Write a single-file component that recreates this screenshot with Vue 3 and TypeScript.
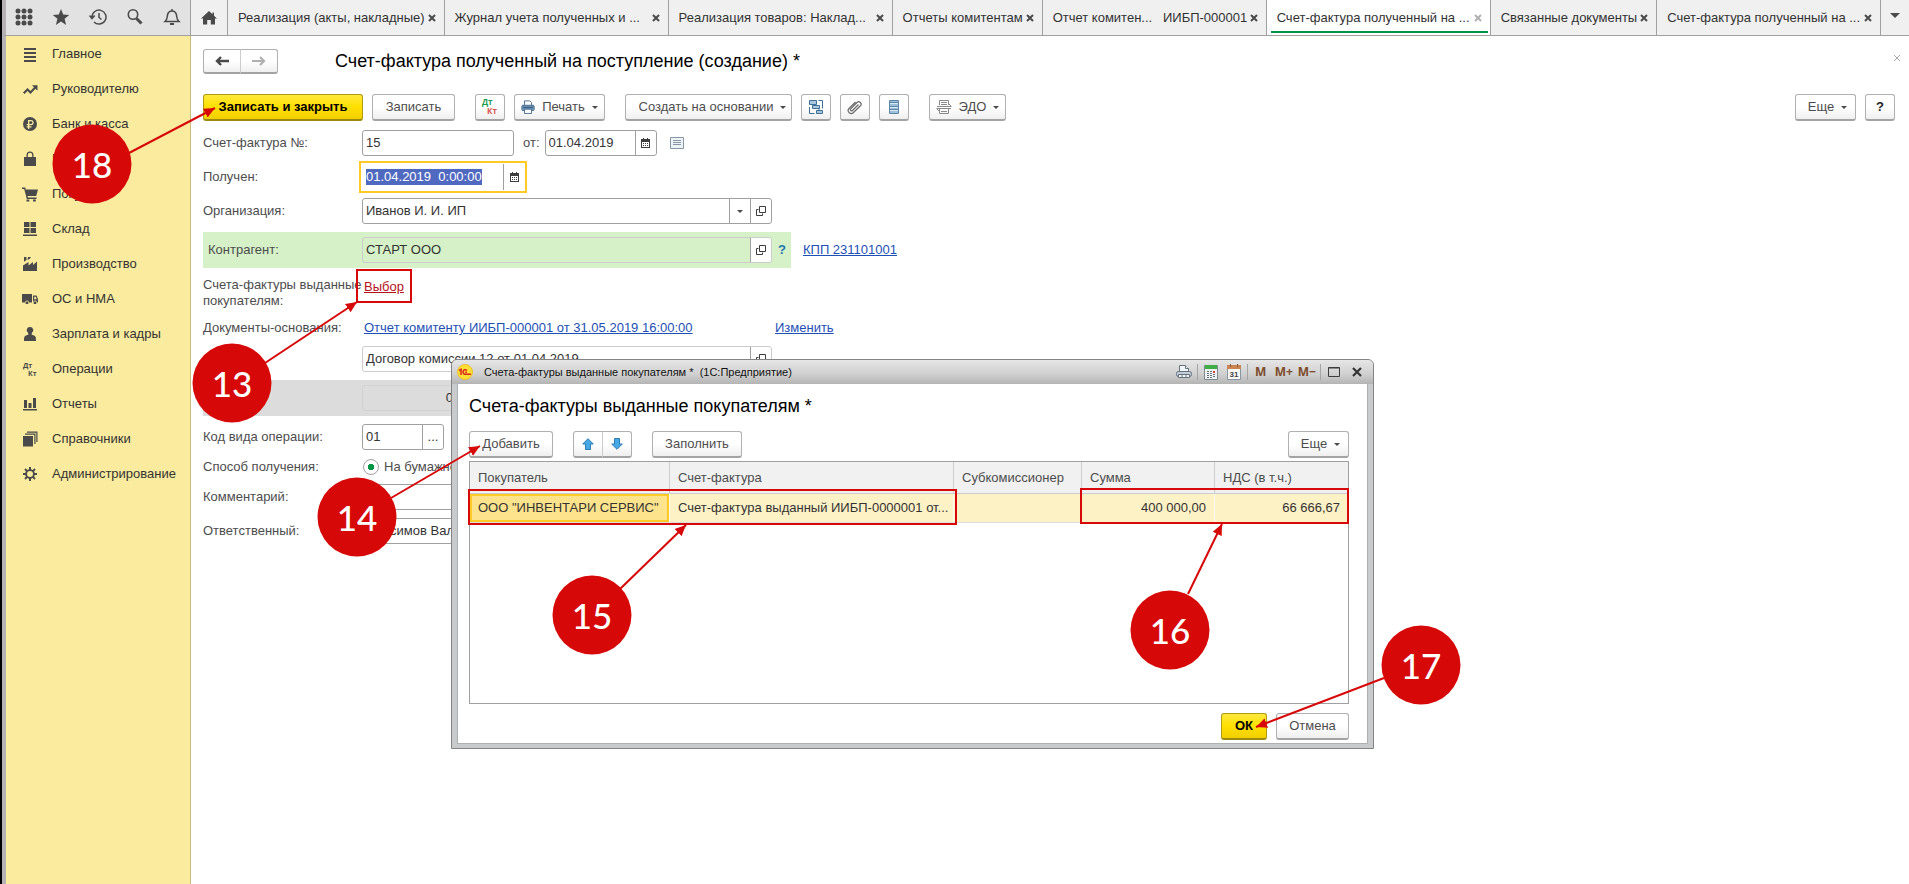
<script setup lang="ts">
import { onMounted, ref } from 'vue'

interface Tab {
  title: string
  size: 'full' | 'fit'
  active?: boolean
}

interface Section {
  title: string
  icon: string
}

interface Callout {
  label: string
  cx: number
  cy: number
  x1: number
  y1: number
  x2: number
  y2: number
}

const tabs: Tab[] = [
  { title: 'Реализация (акты, накладные)', size: 'fit' },
  { title: 'Журнал учета полученных и ...', size: 'full' },
  { title: 'Реализация товаров: Наклад...', size: 'full' },
  { title: 'Отчеты комитентам', size: 'fit' },
  { title: 'Отчет комитен...\u00a0\u00a0 ИИБП-000001', size: 'full' },
  { title: 'Счет-фактура полученный на ...', size: 'full', active: true },
  { title: 'Связанные документы', size: 'fit' },
  { title: 'Счет-фактура полученный на ...', size: 'full' },
]

const sections: Section[] = [
  { title: 'Главное', icon: 'M2 2h12v2H2zM2 6h12v2H2zM2 10h12v2H2zM2 14h12v2H2z' },
  { title: 'Руководителю', icon: 'M1 11.5 5.5 7l3 3L12 6.300 10 4.300h5.500v5.500l-2-2L8.500 13l-3-3-3 3z' },
  {
    title: 'Банк и касса',
    icon: 'M8 1a7 7 0 1 0 0 14A7 7 0 0 0 8 1zM6 4h3a2.500 2.500 0 0 1 0 5.200H7.300v1H9.500v1.200H7.300V13H6v-1.600H4.700v-1.200H6v-1H4.700V8H6zM7.300 5.200V8H9a1.400 1.400 0 0 0 0-2.800z',
  },
  { title: 'Продажи', icon: 'M2 6h2.500V4a3.500 3.500 0 0 1 7 0v2H14v9H2zM5.800 6h4.400V4a2.200 2.200 0 0 0-4.400 0z' },
  {
    title: 'Покупки',
    icon: 'M0 1.500h3.200l.6 2H16l-1.800 6.500H5.500l.5 1.500h8.500V13H4.800L2.200 3H0zM4.500 13.500h2.800v2H4.500zM11 13.500h2.800v2H11z',
  },
  { title: 'Склад', icon: 'M2 1h5.500v5H2zM8.500 1H14v5H8.500zM2 7h5.500v5H2zM8.500 7H14v5H8.500zM1 13.500h14V15H1z' },
  { title: 'Производство', icon: 'M1 15V9.500L6.500 6v3.500L11 6v3l4-3.500V15zM2 1h2.500v3L2 5.800zM6 1h3L7.500 3 5.500 4z' },
  {
    title: 'ОС и НМА',
    icon: 'M0 3h10v8.500H7a2 2 0 0 0-4 0H0zM11 4.500h3.500L16 8v3.500h-1a2 2 0 0 0-4 0zM12.200 5.700v2.500h2.500l-1-2.500zM3.700 10.500h2.600v2.500H3.700zM11.700 10.500h2.600v2.500h-2.600z',
  },
  { title: 'Зарплата и кадры', icon: 'M8 1a3.200 3.200 0 0 1 2 5.800L9.500 8.500 12 9.500c1.500.5 2 1.500 2 5.500H2c0-4 .5-5 2-5.500l2.500-1L6 6.800A3.200 3.200 0 0 1 8 1z' },
  { title: 'Операции', icon: '' },
  { title: 'Отчеты', icon: 'M2 4h3v8H2zM6.500 7h3v5h-3zM11 2h3v10h-3zM1 13h14v1.500H1z' },
  { title: 'Справочники', icon: 'M1 5h10v10.500H1zM3 2.500h10.500V13h-1.200V3.700H3zM5 .5h10.500V11h-1.200V1.700H5z' },
  {
    title: 'Администрирование',
    icon: 'M7 1h2v2.200l1.700.7 1.600-1.600 1.400 1.400-1.600 1.600.7 1.700H15v2h-2.200l-.7 1.700 1.600 1.600-1.400 1.400-1.600-1.600-1.700.7V15H7v-2.200l-1.700-.7-1.600 1.600-1.400-1.400 1.600-1.600L3.200 9H1V7h2.200l.7-1.700-1.600-1.600 1.400-1.400 1.600 1.600L7 3.200zM8 5a3 3 0 1 0 0 6 3 3 0 0 0 0-6z',
  },
]

const callouts: Callout[] = [
  { label: '18', cx: 92, cy: 164, x1: 129, y1: 153, x2: 215, y2: 108 },
  { label: '13', cx: 232, cy: 383, x1: 265, y1: 363, x2: 357, y2: 302 },
  { label: '14', cx: 357, cy: 517, x1: 391, y1: 498, x2: 480, y2: 446 },
  { label: '15', cx: 592, cy: 615, x1: 620, y1: 589, x2: 686, y2: 525 },
  { label: '16', cx: 1170, cy: 630, x1: 1188, y1: 594, x2: 1222, y2: 524 },
  { label: '17', cx: 1421, cy: 665, x1: 1384, y1: 678, x2: 1256, y2: 727 },
]

const received = ref<HTMLInputElement | null>(null)

onMounted(() => {
  received.value?.focus({ preventScroll: true })
  received.value?.select()
})
</script>

<template>
  <div class="app">
    <header class="topbar">
      <div class="tools">
        <button class="tool" aria-label="Меню">
          <svg width="18" height="18" viewBox="0 0 18 18" fill="#4a4a4a">
            <g v-for="r in 3" :key="r">
              <circle v-for="c in 3" :key="c" :cx="c * 6 - 3" :cy="r * 6 - 3" r="2.500" />
            </g>
          </svg>
        </button>
        <button class="tool" aria-label="Избранное">
          <svg width="18" height="18" viewBox="0 0 18 18" fill="#4a4a4a">
            <path d="M9 1l2.200 5.600 6 .4-4.600 3.800L14.100 17 9 13.600 3.900 17l1.500-6.200L.8 7l6-.4z" />
          </svg>
        </button>
        <button class="tool" aria-label="История">
          <svg width="18" height="18" viewBox="0 0 18 18" fill="none" stroke="#4a4a4a" stroke-width="1.500">
            <path d="M3 9a7 7 0 1 1 2 5M0.500 7.500 3 10.500l2.700-3M10 5v4.500l2.500 2" />
          </svg>
        </button>
        <button class="tool" aria-label="Поиск">
          <svg width="18" height="18" viewBox="0 0 18 18" fill="none" stroke="#4a4a4a">
            <circle cx="7" cy="6.500" r="4.700" stroke-width="1.600" />
            <path d="M10.500 10.500l5 5" stroke-width="3" />
          </svg>
        </button>
        <button class="tool" aria-label="Уведомления">
          <svg width="18" height="18" viewBox="0 0 18 18" fill="none" stroke="#4a4a4a" stroke-width="1.500">
            <path d="M9 1v2M2 13.500c2.500-2 2-4 2.500-6.500C5 4.500 6.500 3 9 3s4 1.500 4.500 4c.5 2.500 0 4.500 2.500 6.500z" />
            <path d="M7 16h4" stroke-width="2" />
          </svg>
        </button>
      </div>
      <nav class="tabs">
        <button class="home" aria-label="Начальная страница">
          <svg width="16" height="14" viewBox="0 0 16 14" fill="#4a4a4a">
            <path d="M8 0l3.500 3.300V1.500H13v3.200L16 7.500h-2V13.500H9.800V9H6.200v4.500H2V7.500H0z" />
          </svg>
        </button>
        <div v-for="(tab, i) in tabs" :key="i" class="tab" :class="[tab.size, { active: tab.active }]">
          <a href="#" class="tab-link">{{ tab.title }}</a>
          <button class="tab-close" aria-label="Закрыть">
            <svg width="8" height="8" viewBox="0 0 8 8"><path d="M1 1l6 6M7 1 1 7" /></svg>
          </button>
        </div>
        <button class="tab-more" aria-label="Все вкладки"><i class="caret big"></i></button>
      </nav>
    </header>

    <div class="body">
      <aside class="sidebar">
        <a v-for="s in sections" :key="s.title" href="#" class="section">
          <svg class="section-icon" width="16" height="16" viewBox="0 0 16 16" fill="#4a4a4a" fill-rule="evenodd">
            <path v-if="s.icon" :d="s.icon" />
            <g v-else class="dtkt">
              <text x="1" y="7">Дт</text>
              <text x="6" y="15">Кт</text>
            </g>
          </svg>
          <span>{{ s.title }}</span>
        </a>
      </aside>

      <main class="page">
        <div class="titlebar">
          <div class="history">
            <button class="btn" aria-label="Назад">
              <svg width="14" height="12" viewBox="0 0 14 12" fill="none" stroke="#4a4a4a" stroke-width="2.400"><path d="M14 6H2M6 2 2 6l4 4" /></svg>
            </button>
            <button class="btn" aria-label="Вперед">
              <svg width="14" height="12" viewBox="0 0 14 12" fill="none" stroke="#b0b0b0" stroke-width="2.200"><path d="M0 6h12M8 2l4 4-4 4" /></svg>
            </button>
          </div>
          <h1>Счет-фактура полученный на поступление (создание) *</h1>
          <button class="page-close" aria-label="Закрыть">
            <svg width="8" height="8" viewBox="0 0 8 8" stroke="#a8a8a8"><path d="M1 1l6 6M7 1 1 7" /></svg>
          </button>
        </div>

        <div class="toolbar">
          <button class="btn primary save-close">Записать и закрыть</button>
          <button class="btn save">Записать</button>
          <button class="btn square group" aria-label="Дт Кт">
            <svg width="20" height="20" viewBox="0 0 20 20" class="dtkt large">
              <text x="2" y="8" fill="#1d9c4f">Дт</text>
              <text x="7" y="17" fill="#d9534a">Кт</text>
            </svg>
          </button>
          <button class="btn print">
            <svg width="14" height="14" viewBox="0 0 16 16">
              <path d="M4 6V1h6l2 2v3" fill="#fff" stroke="#3f6485" />
              <rect x="1" y="6" width="14" height="6" rx="1" fill="#7ca6c9" stroke="#3f6485" />
              <path d="M2 8.500h12" stroke="#3f6485" stroke-width="2" />
              <path d="M4 10.500h8v5H4z" fill="#fff" stroke="#3f6485" />
            </svg>
            <span>Печать</span><i class="caret"></i>
          </button>
          <button class="btn group create">Создать на основании<i class="caret"></i></button>
          <button class="btn square" aria-label="Структура подчиненности">
            <svg width="16" height="16" viewBox="0 0 16 16" fill="#a9c6dd" stroke="#3c7099">
              <path d="M1.500 1.500h7v4h-7zM4.500 6.500h7v3h-7zM8.500 11.500h6v3h-6z" />
              <path d="M10.500 1.500h4v8M1.500 8v6.500h5M5 5.500v1M11 9.500v2" fill="none" />
            </svg>
          </button>
          <button class="btn square" aria-label="Файлы">
            <svg width="16" height="16" viewBox="0 0 16 16" fill="none" stroke="#6b6b6b" stroke-width="1.200">
              <path d="M11.500 5.500l-6 6a1 1 0 0 1-1.700-1.700L10 3.500a2.300 2.300 0 0 1 3.400 3.300L6.500 13.500A3 3 0 0 1 2 9.500L8.500 3" />
            </svg>
          </button>
          <button class="btn square" aria-label="Дополнительные сведения">
            <svg width="12" height="16" viewBox="0 0 12 16" stroke="#5c86a8">
              <path d="M1.500 1.500h9v13h-9z" fill="#9dc0da" />
              <path d="M2 4.500h8M2 8.500h8M2 11.500h8" stroke="#d9e8f3" />
              <path d="M2 3.500h8M2 7.500h8M2 10.500h8" />
            </svg>
          </button>
          <button class="btn group edo">
            <svg width="16" height="16" viewBox="0 0 16 16" fill="none" stroke="#8a8a8a">
              <path d="M3.500 6V1.500h9V6M3.500 10v4.500h9V10M5 3.500h6M5 5.500h6M1 7.500h14M1 9.500h14M5 12.500h6M13 5l2.500 2.500M3 12 .5 9.500" />
            </svg>
            <span>ЭДО</span><i class="caret"></i>
          </button>
          <span class="spacer"></span>
          <button class="btn more">Еще<i class="caret"></i></button>
          <button class="btn square help">?</button>
        </div>

        <form class="form" @submit.prevent>
          <div class="row">
            <label for="number">Счет-фактура №:</label>
            <div class="field number"><input id="number" value="15" /></div>
            <label class="inline" for="date">от:</label>
            <div class="field date">
              <input id="date" value="01.04.2019" />
              <button type="button" aria-label="Календарь"><svg class="cal" width="9" height="10" viewBox="0 0 9 10"><path d="M0 1h2V0h1v1h3V0h1v1h2v9H0zM1 4v5h7V4z" fill-rule="evenodd" /><path d="M2 5h1v1H2zM4 5h1v1H4zM6 5h1v1H6zM2 7h1v1H2zM4 7h1v1H4zM6 7h1v1H6z" /></svg></button>
            </div>
            <svg class="note" width="14" height="12" viewBox="0 0 14 12" fill="#eef3f7" stroke="#8797a6">
              <path d="M.5.5h13v11H.5zM3 3.500h8M3 5.500h8M3 7.500h8" />
            </svg>
          </div>

          <div class="row">
            <label for="received">Получен:</label>
            <div class="field received">
              <input id="received" ref="received" value="01.04.2019  0:00:00" />
              <button type="button" aria-label="Календарь"><svg class="cal" width="9" height="10" viewBox="0 0 9 10"><path d="M0 1h2V0h1v1h3V0h1v1h2v9H0zM1 4v5h7V4z" fill-rule="evenodd" /><path d="M2 5h1v1H2zM4 5h1v1H4zM6 5h1v1H6zM2 7h1v1H2zM4 7h1v1H4zM6 7h1v1H6z" /></svg></button>
            </div>
          </div>

          <div class="row">
            <label for="org">Организация:</label>
            <div class="field wide">
              <input id="org" value="Иванов И. И. ИП" />
              <button type="button" aria-label="Выбрать"><i class="caret"></i></button>
              <button type="button" aria-label="Открыть"><svg class="open" width="10" height="10" viewBox="0 0 10 10"><path d="M3.500.5h6v6h-6zM2.500 3.500h-2v6h6v-2" /></svg></button>
            </div>
          </div>

          <div class="row">
            <div class="band green">
              <label for="partner">Контрагент:</label>
              <div class="field wide locked">
                <input id="partner" value="СТАРТ ООО" readonly />
                <button type="button" aria-label="Открыть"><svg class="open" width="10" height="10" viewBox="0 0 10 10"><path d="M3.500.5h6v6h-6zM2.500 3.500h-2v6h6v-2" /></svg></button>
              </div>
              <button type="button" class="hint">?</button>
            </div>
            <a href="#" class="kpp">КПП 231101001</a>
          </div>

          <div class="row invoices">
            <span class="caption">Счета-фактуры выданные покупателям:</span>
            <a href="#" class="pick">Выбор</a>
          </div>

          <div class="row basis">
            <span class="caption">Документы-основания:</span>
            <a href="#" class="doc">Отчет комитенту ИИБП-000001 от 31.05.2019 16:00:00</a>
            <a href="#">Изменить</a>
          </div>

          <div class="row">
            <span class="caption"></span>
            <div class="field wide locked">
              <input value="Договор комиссии 12 от 01.04.2019" aria-label="Договор" readonly />
              <button type="button" aria-label="Открыть"><svg class="open" width="10" height="10" viewBox="0 0 10 10"><path d="M3.500.5h6v6h-6zM2.500 3.500h-2v6h6v-2" /></svg></button>
            </div>
          </div>

          <div class="row">
            <div class="band gray">
              <label for="sum">Сумма:</label>
              <div class="field sum locked"><input id="sum" value="0,00" readonly /></div>
            </div>
          </div>

          <div class="row">
            <label for="code">Код вида операции:</label>
            <div class="field code">
              <input id="code" value="01" />
              <button type="button" aria-label="Выбрать">...</button>
            </div>
          </div>

          <div class="row way">
            <span class="caption">Способ получения:</span>
            <label class="radio"><input type="radio" name="way" checked /><span>На бумажном носителе</span></label>
          </div>

          <div class="row">
            <label for="comment">Комментарий:</label>
            <div class="field wide"><input id="comment" /></div>
          </div>

          <div class="row">
            <label for="person">Ответственный:</label>
            <div class="field wide"><input id="person" value="Максимов Валерий" /></div>
          </div>
        </form>
      </main>
    </div>

    <section class="dialog" role="dialog" aria-label="Счета-фактуры выданные покупателям">
      <div class="dialog-bar">
        <svg width="16" height="16" viewBox="0 0 16 16">
          <circle cx="8" cy="8" r="7.500" fill="#ffe135" stroke="#e8bd2c" />
          <path d="M2 6.500 4 5.300V11M9.800 6.500A2.200 2.200 0 1 0 8.200 10.200H14M10 8.300H8.300" fill="none" stroke="#d9261c" stroke-width="1.500" />
        </svg>
        <span class="dialog-caption">Счета-фактуры выданные покупателям *&nbsp; (1С:Предприятие)</span>
        <div class="sys">
          <button aria-label="Печать">
            <svg width="16" height="16" viewBox="0 0 16 16" fill="#f4f7fa" stroke="#65717d">
              <path d="M3.500 8V1.500h6l3 3V8z" /><path d="M9.500 1.500v3h3" />
              <rect x=".5" y="7.500" width="15" height="5" rx="2" fill="#c3ccd6" />
              <path d="M2.500 10.500h11v3h-11z" /><path d="M5 12h2M9 12h2" />
            </svg>
          </button>
          <i class="sep"></i>
          <button aria-label="Калькулятор">
            <svg width="14" height="16" viewBox="0 0 14 16">
              <path d="M.5 1.500h13v14H.5z" fill="#eef1f2" stroke="#7d8a90" />
              <path d="M1 1h12v4H1z" fill="#3fae49" />
              <path d="M3 7h2v1H3zM6 7h2v1H6zM3 9h2v1H3zM6 9h2v1H6zM3 11h2v1H3zM6 11h2v1H6zM3 13h2v1H3zM6 13h2v1H6zM9 10h2v1H9zM9 12h2v1H9z" fill="#66757c" />
              <path d="M9 7h2v2H9z" fill="#d8453a" />
            </svg>
          </button>
          <button aria-label="Календарь">
            <svg width="14" height="16" viewBox="0 0 14 16">
              <path d="M.5 2.500h13v13H.5z" fill="#fafafa" stroke="#8796a3" />
              <path d="M0 1h14v4H0z" fill="#c98452" /><path d="M3 0h1v3H3zM10 0h1v3h-1z" fill="#8a5a35" />
              <text x="7" y="13" text-anchor="middle" class="day">31</text>
            </svg>
          </button>
          <i class="sep"></i>
          <button class="mem">M</button>
          <button class="mem">M+</button>
          <button class="mem">M−</button>
          <i class="sep"></i>
          <button aria-label="Развернуть">
            <svg width="12" height="12" viewBox="0 0 12 12" fill="none" stroke="#3d3d3d"><path d="M.5 1.500h11v9H.5zM.5 2h11" /></svg>
          </button>
          <button aria-label="Закрыть">
            <svg width="10" height="10" viewBox="0 0 10 10" stroke="#333" stroke-width="2.200"><path d="M1 1l8 8M9 1 1 9" /></svg>
          </button>
        </div>
      </div>

      <div class="dialog-body">
        <h2>Счета-фактуры выданные покупателям *</h2>
        <div class="dialog-tools">
          <button class="btn add">Добавить</button>
          <div class="history move">
            <button class="btn" aria-label="Вверх">
              <svg width="12" height="12" viewBox="0 0 12 12" fill="#46a9e6" stroke="#2f7cb0"><path d="M6 .7 11.300 6H8.500v5.500h-5V6H.7z" /></svg>
            </button>
            <button class="btn" aria-label="Вниз">
              <svg width="12" height="12" viewBox="0 0 12 12" fill="#46a9e6" stroke="#2f7cb0"><path d="M6 11.300.7 6h2.800V.5h5V6h2.800z" /></svg>
            </button>
          </div>
          <button class="btn fill">Заполнить</button>
          <span class="spacer"></span>
          <button class="btn more">Еще<i class="caret"></i></button>
        </div>

        <div class="grid-box">
          <table>
            <colgroup>
              <col class="c1" /><col class="c2" /><col class="c3" /><col class="c4" /><col />
            </colgroup>
            <thead>
              <tr><th>Покупатель</th><th>Счет-фактура</th><th>Субкомиссионер</th><th>Сумма</th><th>НДС (в т.ч.)</th></tr>
            </thead>
            <tbody>
              <tr>
                <td class="current">ООО "ИНВЕНТАРИ СЕРВИС"</td>
                <td>Счет-фактура выданный ИИБП-0000001 от...</td>
                <td></td>
                <td class="num">400 000,00</td>
                <td class="num">66 666,67</td>
              </tr>
            </tbody>
          </table>
        </div>

        <div class="dialog-actions">
          <button class="btn primary ok">ОК</button>
          <button class="btn cancel">Отмена</button>
        </div>
      </div>
    </section>

    <svg class="callouts">
      <defs>
        <marker id="tip" markerUnits="userSpaceOnUse" markerWidth="12" markerHeight="12" refX="11" refY="6" orient="auto">
          <path d="M0 1l11 5-11 5z" fill="#d70808" />
        </marker>
      </defs>
      <g fill="none" stroke="#d70808" stroke-width="2">
        <rect x="357" y="270" width="54" height="32" />
        <rect x="469" y="490" width="487" height="34" />
        <rect x="1081" y="489" width="267" height="34" />
      </g>
      <g v-for="c in callouts" :key="c.label">
        <line :x1="c.x1" :y1="c.y1" :x2="c.x2" :y2="c.y2" stroke="#d70808" stroke-width="2" marker-end="url(#tip)" />
        <circle :cx="c.cx" :cy="c.cy" r="39.500" fill="#d70808" />
        <text :x="c.cx" :y="c.cy + 14" text-anchor="middle">{{ c.label }}</text>
      </g>
    </svg>
  </div>
</template>

<style>
body {
  background: #fff;
}
</style>

<style scoped>
.app,
.app * {
  box-sizing: border-box;
}

.app {
  position: relative;
  display: flex;
  flex-direction: column;
  min-height: 100vh;
  overflow: hidden;
  border-left: 2px solid #000;
  font: 13px/16px "Liberation Sans", Arial, sans-serif;
  color: #333;
}

button,
input {
  font: inherit;
  color: inherit;
  margin: 0;
  padding: 0;
  border: 0;
  background: none;
}

svg {
  display: block;
  flex: none;
}

a {
  color: #1d4fb5;
}

.topbar {
  display: flex;
  height: 36px;
  border-left: 4px solid #b5b1b4;
  border-bottom: 1px solid #a0a0a0;
}

.tools {
  display: flex;
  align-items: center;
  width: 185px;
  flex: none;
  background: #e2e2e2;
  border-right: 1px solid #a0a0a0;
}

.tool {
  display: flex;
  justify-content: center;
  width: 37px;
  padding-bottom: 2px;
}

.tabs {
  display: flex;
  flex: 1;
  min-width: 0;
  background: #f0f0f0;
}

.home {
  display: flex;
  align-items: center;
  justify-content: center;
  width: 37px;
  flex: none;
  border-right: 1px solid #a0a0a0;
}

.tab {
  display: flex;
  align-items: center;
  justify-content: space-between;
  padding: 0 4px 0 10px;
  border-right: 1px solid #a0a0a0;
  white-space: nowrap;
}

.tab.full {
  flex: 0 1 224px;
  min-width: 0;
}

.tab-link {
  color: #333;
  text-decoration: none;
}

.tab-close {
  padding: 4px 4px 4px 3px;
  stroke: #4a4a4a;
  stroke-width: 2;
}

.tab.active {
  background: linear-gradient(#009646, #009646) 4px 31px / calc(100% - 6px) 2px no-repeat #fff;
}

.active .tab-close {
  stroke: #b0b0b0;
}

.tab-more {
  display: flex;
  align-items: center;
  justify-content: center;
  flex: 1;
  padding-bottom: 4px;
}

.caret {
  width: 0;
  height: 0;
  flex: none;
  border: 3px solid transparent;
  border-top-color: #4a4a4a;
  border-bottom: 0;
}

.caret.big {
  border-width: 5px;
  border-bottom: 0;
}

.body {
  display: flex;
  flex: 1;
}

.sidebar {
  width: 189px;
  flex: none;
  background: #faeb9e;
  border-left: 4px solid #b5b1b4;
  border-right: 1px solid #c9ba78;
}

.section {
  display: flex;
  align-items: center;
  gap: 14px;
  height: 35px;
  padding-left: 16px;
  color: #333;
  text-decoration: none;
}

.dtkt {
  font: bold 7px "Open Sans", sans-serif;
}

.dtkt.large {
  font-size: 8px;
}

.page {
  flex: 1;
  min-width: 0;
  padding: 12px 14px 0 12px;
}

.titlebar {
  display: flex;
  align-items: center;
  height: 26px;
}

h1,
h2 {
  margin: 0;
  font-size: 18px;
  line-height: 24px;
  font-weight: 400;
  color: #000;
}

h1 {
  flex: 1;
  margin-left: 57px;
}

.page-close {
  align-self: flex-start;
  margin: 6px -6px 0 0;
}

.btn {
  display: flex;
  align-items: center;
  justify-content: center;
  gap: 9px;
  height: 27px;
  border: 1px solid #b0b0b0;
  border-bottom: 2px solid #a3a3a3;
  border-radius: 3px;
  background: linear-gradient(#fff 50%, #efefef);
  color: #4d4d4d;
  white-space: nowrap;
}

.btn.primary {
  background: linear-gradient(#ffe93c, #ffe000 50%, #f2cf00);
  border-color: #b09c12;
  border-bottom-color: #9c8a10;
  color: #000;
  font-weight: 700;
}

.history {
  display: flex;
}

.history .btn {
  width: 38px;
  height: 25px;
}

.history .btn:first-child {
  border-radius: 3px 0 0 3px;
}

.history .btn:last-child {
  margin-left: -1px;
  border-left-color: #ccc;
  border-radius: 0 3px 3px 0;
}

.toolbar {
  display: flex;
  gap: 9px;
  margin-top: 20px;
}

.save-close {
  width: 160px;
}

.save {
  width: 83px;
}

.square {
  width: 30px;
}

.group {
  margin-left: 11px;
}

.print {
  width: 91px;
  gap: 7px;
}

.create {
  width: 167px;
  gap: 7px;
  padding-left: 8px;
}

.edo {
  width: 77px;
  gap: 7px;
}

.spacer {
  flex: 1;
}

.more {
  width: 61px;
  gap: 7px;
  padding-left: 4px;
}

.help {
  font-weight: 700;
  color: #222;
}

.form {
  display: flex;
  flex-direction: column;
  gap: 8px;
  margin-top: 9px;
}

.row {
  display: flex;
  align-items: center;
}

.row > label,
.caption {
  width: 159px;
  flex: none;
  color: #4d4d4d;
}

.row > label.inline {
  width: auto;
  margin: 0 5px 0 9px;
}

.field {
  display: flex;
  height: 26px;
  border: 1px solid #a0a0a0;
  border-radius: 3px;
  background: #fff;
}

.field input {
  flex: 1;
  width: 0;
  min-width: 0;
  padding-left: 3px;
  outline: 0;
}

.field button {
  display: flex;
  align-items: center;
  justify-content: center;
  width: 21px;
  border-left: 1px solid #a0a0a0;
}

.field.number {
  width: 152px;
}

.field.date {
  width: 112px;
}

.note {
  margin-left: 13px;
}

.field.received {
  width: 162px;
  border: 0;
  outline: 2px solid #ffc926;
  outline-offset: 1px;
  border-radius: 0;
}

.field.received input {
  padding-left: 4px;
  white-space: pre;
}

.field.received input::selection {
  background: #5069c0;
  color: #fff;
}

.field.wide {
  width: 410px;
}

.field.locked {
  border-color: #ccc;
}

.cal {
  fill: #3d3d3d;
}

.open {
  fill: none;
  stroke: #3d3d3d;
}

.band {
  display: flex;
  align-items: center;
  width: 588px;
  height: 36px;
  padding-left: 5px;
}

.band label {
  width: 154px;
  color: #4d4d4d;
}

.green {
  background: #d6f0c8;
}

.green .field {
  background: none;
}

.green .field button {
  background: #fff;
  border-radius: 0 2px 2px 0;
}

.gray {
  background: #dcdcdc;
}

.field.sum {
  width: 112px;
  background: none;
  border-color: #d2d2d2;
}

.sum input {
  padding-right: 2px;
  text-align: right;
}

.hint {
  margin-left: 6px;
  color: #1a75b0;
  font-weight: 700;
}

.kpp {
  margin-left: 12px;
}

.invoices {
  height: 34px;
}

.pick {
  margin: 0 0 12px 2px;
  color: #b5121b;
}

.basis {
  height: 20px;
}

.doc {
  width: 411px;
  margin-left: 2px;
}

.field.code {
  width: 82px;
}

.way {
  height: 18px;
}

.row > label.radio {
  display: flex;
  align-items: center;
  gap: 5px;
  width: auto;
  margin-left: 1px;
  white-space: nowrap;
}

.radio input {
  appearance: none;
  width: 16px;
  height: 16px;
  border: 1px solid #a0a0a0;
  border-radius: 50%;
  background: radial-gradient(circle, #009646 3px, #fff 3px);
}

.dialog {
  position: absolute;
  left: 449px;
  top: 359px;
  width: 923px;
  padding: 0 5px 4px;
  border: 1px solid #848484;
  border-radius: 6px 6px 0 0;
  background: #c9cacb;
}

.dialog-bar {
  display: flex;
  align-items: center;
  height: 24px;
  margin: 0 -5px;
  padding-left: 5px;
  border-radius: 5px 5px 0 0;
  background: linear-gradient(#e6e6e6, #cfcfcf 60%, #b4b4b4);
}

.dialog-caption {
  flex: 1;
  margin-left: 11px;
  font-size: 11px;
  color: #111;
}

.sys {
  display: flex;
  align-items: center;
  gap: 5px;
  padding-right: 7px;
}

.sys button {
  display: flex;
  align-items: center;
  justify-content: center;
  min-width: 18px;
  height: 20px;
}

.sys .mem {
  font: 700 12px/16px "Open Sans", sans-serif;
  color: #7d4b2a;
}

.day {
  font: bold 8px "Liberation Sans", sans-serif;
  fill: #444;
}

.sep {
  width: 1px;
  height: 16px;
  margin: 0 -1px;
  background: #a5a5a5;
}

.dialog-body {
  padding: 10px 18px 3px 11px;
  border: 1px solid #aeb0b2;
  border-top: 0;
  background: #fff;
}

.dialog-tools {
  display: flex;
  margin-top: 13px;
}

.add {
  width: 84px;
}

.move {
  margin: 0 20px;
}

.move .btn {
  width: 30px;
  height: 27px;
}

.fill {
  width: 90px;
}

.grid-box {
  height: 243px;
  margin-top: 3px;
  border: 1px solid #a0a0a0;
}

table {
  width: 100%;
  table-layout: fixed;
  border-collapse: separate;
  border-spacing: 0;
}

.c1 {
  width: 200px;
}

.c2 {
  width: 284px;
}

.c3 {
  width: 128px;
}

.c4 {
  width: 133px;
}

th {
  height: 32px;
  padding: 0 8px;
  background: #f1f1f1;
  border-right: 1px solid #ccc;
  border-bottom: 1px solid #ccc;
  font-weight: 400;
  text-align: left;
  color: #4d4d4d;
}

td {
  height: 29px;
  padding: 0 8px;
  background: #fdf1c6;
  border-right: 1px solid #fffaf0;
  border-bottom: 1px solid #ddd;
  white-space: nowrap;
}

th:last-child,
td:last-child {
  border-right: 0;
}

td.current {
  background: #fee38d;
  box-shadow: inset 0 0 0 2px #ffc926;
}

.num {
  text-align: right;
}

.dialog-actions {
  display: flex;
  justify-content: flex-end;
  gap: 9px;
  margin-top: 9px;
}

.ok {
  width: 46px;
}

.cancel {
  width: 73px;
}

.callouts {
  position: absolute;
  left: -2px;
  top: 0;
  width: 100%;
  height: 100%;
  overflow: visible;
  pointer-events: none;
}

.callouts text {
  font: 500 35px Lato, sans-serif;
  fill: #fff;
}
</style>
